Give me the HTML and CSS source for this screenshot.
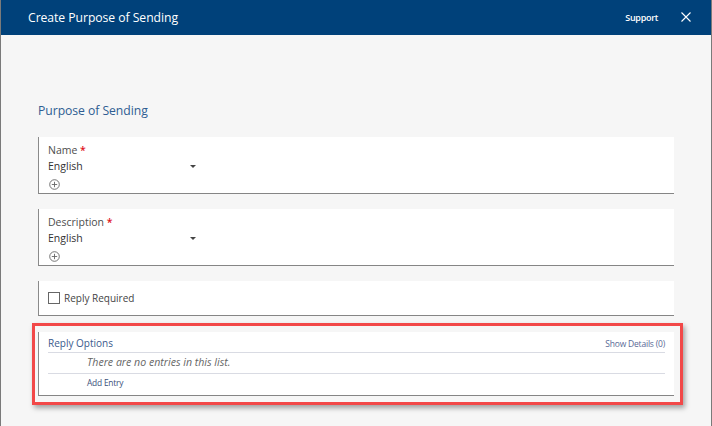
FILE: index.html
```html
<!DOCTYPE html>
<html>
<head>
<meta charset="utf-8">
<link rel="stylesheet" href="styles.css">
</head>
<body>
<div class="dialog">
  <header class="header">
    <div class="title">Create Purpose of Sending</div>
    <div class="header-actions">
      <span class="support">Support</span>
      <svg class="close" width="10" height="10" viewBox="0 0 10 10"><path d="M0.5 0.5 L9.5 9.5 M9.5 0.5 L0.5 9.5" stroke="#fff" stroke-width="1.1" fill="none"/></svg>
    </div>
  </header>
  <main class="content">
    <h2 class="section-title">Purpose of Sending</h2>

    <div class="card field-card">
      <div class="label">Name <span class="req">*</span></div>
      <div class="select"><span>English</span><span class="caret"></span></div>
      <svg class="plus" width="11" height="11" viewBox="0 0 11 11"><circle cx="5.5" cy="5.5" r="4.8" stroke="#666" stroke-width="0.9" fill="none"/><path d="M5.5 2.8 V8.2 M2.8 5.5 H8.2" stroke="#666" stroke-width="0.9"/></svg>
    </div>

    <div class="card field-card">
      <div class="label">Description <span class="req">*</span></div>
      <div class="select"><span>English</span><span class="caret"></span></div>
      <svg class="plus" width="11" height="11" viewBox="0 0 11 11"><circle cx="5.5" cy="5.5" r="4.8" stroke="#666" stroke-width="0.9" fill="none"/><path d="M5.5 2.8 V8.2 M2.8 5.5 H8.2" stroke="#666" stroke-width="0.9"/></svg>
    </div>

    <div class="card check-card">
      <span class="checkbox"></span>
      <span class="check-label">Reply Required</span>
    </div>

    <div class="card list-card">
      <div class="highlight"></div>
      <div class="list-head">
        <span class="list-title">Reply Options</span>
        <span class="show-details">Show Details (0)</span>
      </div>
      <div class="list-empty">There are no entries in this list.</div>
      <div class="list-add">Add Entry</div>
    </div>
  </main>
</div>
</body>
</html>
```
FILE: styles.css
```css
html, body {
  margin: 0;
  padding: 0;
}
body {
  font-family: "Open Sans", "Noto Sans", sans-serif;
  background: #f6f6f6;
}
.dialog {
  width: 712px;
  height: 426px;
  box-sizing: border-box;
  border-left: 1px solid #7a7a7a;
  border-right: 1px solid #7a7a7a;
  background: #f6f6f6;
  overflow: hidden;
}
.header {
  height: 35px;
  background: #00417a;
  display: flex;
  align-items: center;
  justify-content: space-between;
  padding: 0 20px 0 27px;
}
.title {
  color: #fff;
  font-size: 12.2px;
  font-weight: 500;
  letter-spacing: -0.05px;
  margin-top: -1px;
}
.header-actions {
  display: flex;
  align-items: center;
  gap: 23px;
}
.support {
  color: #fff;
  font-size: 9px;
  font-weight: 600;
  letter-spacing: -0.3px;
  margin-top: -1px;
}
.close {
  display: block;
  margin-top: -1px;
}
.content {
  padding: 67px 37px 0 37px;
}
.section-title {
  margin: 0 0 17px 0;
  font-size: 12.2px;
  font-weight: 400;
  color: #2e5d92;
  line-height: 18px;
  letter-spacing: -0.05px;
}
.card {
  background: #fff;
  border-left: 1px solid #8a8a8a;
  border-bottom: 1px solid #858585;
  box-sizing: border-box;
  margin-bottom: 15px;
}
.field-card {
  height: 57px;
  padding: 6px 9px 0 9px;
}
.label {
  font-size: 10.5px;
  line-height: 15px;
  color: #4d4d4d;
}
.req {
  color: #e0131b;
  font-weight: 600;
}
.select {
  width: 150px;
  display: flex;
  justify-content: space-between;
  align-items: center;
  font-size: 10.5px;
  line-height: 16px;
  color: #333;
}
.caret {
  width: 0;
  height: 0;
  border-left: 3px solid transparent;
  border-right: 3px solid transparent;
  border-top: 3px solid #444;
  margin-right: 2px;
}
.plus {
  display: block;
  margin: 5px 0 0 1px;
}
.check-card {
  height: 35px;
  display: flex;
  align-items: center;
  padding: 0 9px;
  gap: 4px;
}
.checkbox {
  width: 10px;
  height: 10px;
  border: 1px solid #666;
  background: #fff;
  margin-top: -1px;
}
.check-label {
  font-size: 10px;
  color: #444;
}
.list-card {
  position: relative;
  margin-top: 16px;
  height: 64px;
  padding: 2px 9px 0 9px;
}
.highlight {
  position: absolute;
  top: -9px;
  left: -7px;
  right: -9px;
  bottom: -10px;
  border: 3px solid #f24848;
  box-shadow: 2px 3px 5px rgba(0, 0, 0, 0.35);
  pointer-events: none;
}
.list-head {
  display: flex;
  justify-content: space-between;
  align-items: center;
  height: 18px;
  border-bottom: 1px solid #d9dbe3;
}
.list-title {
  font-size: 10px;
  color: #3b5a8c;
}
.show-details {
  font-size: 8.5px;
  color: #5a6a96;
  letter-spacing: -0.2px;
}
.list-empty {
  height: 20px;
  line-height: 19px;
  padding-left: 39px;
  font-size: 10.6px;
  font-style: italic;
  color: #666;
  border-bottom: 1px solid #d9dbe3;
}
.list-add {
  padding-left: 39px;
  font-size: 8.4px;
  line-height: 18px;
  color: #3b4f7a;
  letter-spacing: -0.2px;
}
```
